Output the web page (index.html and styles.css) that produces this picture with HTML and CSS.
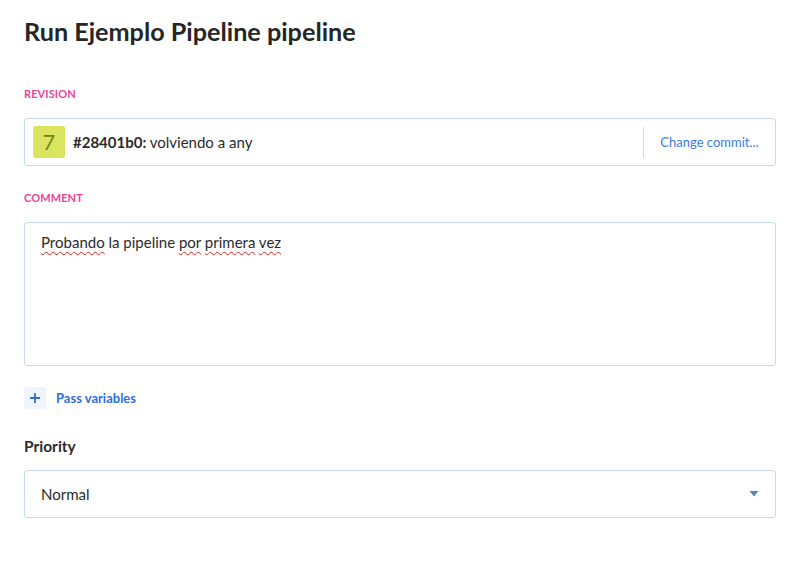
FILE: index.html
```html
<!DOCTYPE html>
<html>
<head>
<meta charset="utf-8">
<link rel="stylesheet" href="styles.css">
</head>
<body>
<div class="page">
  <h1 class="title">Run Ejemplo Pipeline pipeline</h1>

  <div class="label label-revision">REVISION</div>
  <div class="revision">
    <div class="badge">7</div>
    <div class="commit"><b>#28401b0:</b> volviendo a any</div>
    <div class="sep"></div>
    <a class="change">Change commit...</a>
  </div>

  <div class="label label-comment">COMMENT</div>
  <div class="comment"><span class="sp">Probando</span> la pipeline <span class="sp">por</span> <span class="sp">primera</span> <span class="sp">vez</span></div>

  <div class="vars">
    <span class="plus"><svg width="22" height="22" viewBox="0 0 22 22"><path d="M11 6v10M6 11h10" stroke="#2f6fdc" stroke-width="1.8"/></svg></span>
    <span class="vars-text">Pass variables</span>
  </div>

  <div class="priority">Priority</div>
  <div class="select">
    <span>Normal</span>
    <svg class="caret" width="10" height="6" viewBox="0 0 10 6"><path d="M0.5 0h9L5 5.5z" fill="#5d86b6"/></svg>
  </div>
</div>
</body>
</html>
```
FILE: styles.css
```css
* { box-sizing: border-box; }
html, body { margin: 0; padding: 0; background: #fff; }
body { font-family: Lato, "Open Sans", sans-serif; color: #2b2b2b; }
.page { padding: 0 25px 0 24px; }
.title { margin: 0; padding-top: 15px; font-size: 25.2px; font-weight: 700; line-height: 32px; color: #262626; }
.label { font-size: 11px; font-weight: 700; color: #e8449a; line-height: 14px; letter-spacing: 0.1px; }
.label-revision { margin-top: 40px; }
.revision { margin-top: 17px; height: 48px; border: 1px solid #c6daf2; border-radius: 3px; display: flex; align-items: center; padding-left: 8px; }
.badge { width: 32px; height: 32px; background: #dbe45e; color: #6f8a17; font-size: 22px; line-height: 32px; text-align: center; border-radius: 2px; }
.commit { margin-left: 8px; font-size: 15px; color: #2b2b2b; flex: 1; }
.commit b { font-weight: 700; }
.sep { width: 1px; height: 31px; background: #c6daf2; }
.change { width: 131px; text-align: center; font-size: 13px; color: #3b7be2; }
.label-comment { margin-top: 25px; }
.comment { margin-top: 17px; height: 144px; border: 1px solid #c6daf2; border-radius: 3px; padding: 10px 16px; font-size: 15px; line-height: 18px; }
.sp { text-decoration: underline wavy #e0201b; text-decoration-thickness: 1px; text-underline-offset: 3px; }
.vars { margin-top: 21px; display: flex; align-items: center; }
.plus { width: 22px; height: 22px; background: #eef5fd; border-radius: 2px; display: block; }
.plus svg { display: block; }
.vars-text { margin-left: 10px; font-size: 13px; font-weight: 700; color: #2f6fdc; }
.priority { margin-top: 28px; font-size: 15.5px; font-weight: 700; line-height: 18px; color: #2b2b2b; }
.select { margin-top: 15px; height: 48px; border: 1px solid #c6daf2; border-radius: 3px; display: flex; align-items: center; justify-content: space-between; padding: 0 16px 0 16px; font-size: 15px; }
.caret { display: block; margin-top: -1px; }
```
